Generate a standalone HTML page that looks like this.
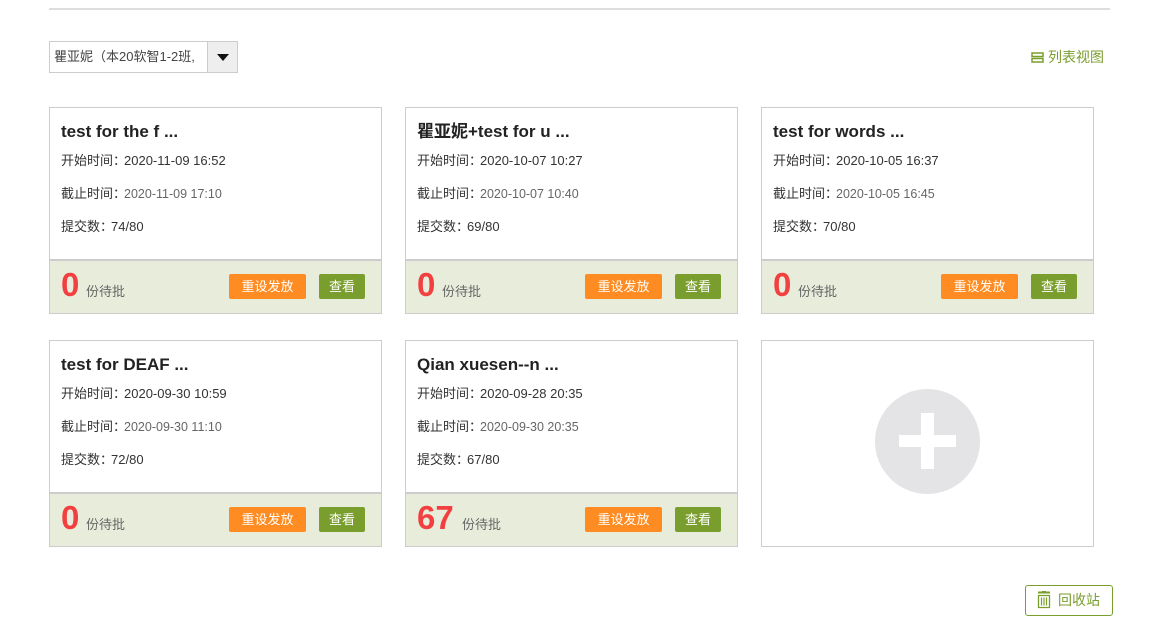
<!DOCTYPE html>
<html><head><meta charset="utf-8"><style>
*{margin:0;padding:0;box-sizing:border-box}
body{width:1164px;height:631px;background:#fff;position:relative;overflow:hidden;font-family:"Liberation Sans","Noto Sans CJK SC",sans-serif;color:#333}
.line{position:absolute;left:49px;top:8px;width:1061px;height:2px;background:#ddd}
.sel{position:absolute;left:49px;top:41px;width:189px;height:32px;border:1px solid #ccc;font-size:13px;line-height:30px;padding-left:4px;color:#444}
.sel .ar{position:absolute;right:0;top:0;width:30px;height:30px;background:#eee;border-left:1px solid #ccc}
.sel .ar:after{content:"";position:absolute;left:9px;top:12px;border-left:6px solid transparent;border-right:6px solid transparent;border-top:7px solid #111}
.lv{position:absolute;left:1031px;top:47px;font-size:14px;color:#7a9e2e;line-height:20px}
.card{position:absolute;width:333px;height:207px;border:1px solid #ccc;background:#fff}
.t{position:absolute;left:11px;top:13px;font-size:17px;font-weight:bold;color:#222;line-height:22px;height:22px;white-space:nowrap}
.r{position:absolute;left:11px;font-size:13px;color:#333;line-height:18px;white-space:nowrap}
.r span{margin-left:-2px}
.r.g span{color:#666;font-size:12.5px}
.ft{position:absolute;left:0;bottom:0;width:331px;height:54px;background:#e8eddb;border-top:2px solid #ccc}
.n{position:absolute;left:11px;top:5px;font-size:33px;font-weight:bold;color:#f24040;line-height:38px}
.w{position:absolute;top:22px;font-size:13px;color:#666;line-height:18px}
.b1{position:absolute;left:179px;top:13px;width:77px;height:25px;background:#ff8c22;color:#fff;font-size:13px;text-align:center;line-height:25px;border-radius:2px}
.b2{position:absolute;left:269px;top:13px;width:46px;height:25px;background:#7a9e2e;color:#fff;font-size:13px;text-align:center;line-height:25px;border-radius:2px}
.rb{position:absolute;left:1025px;top:585px;width:88px;height:31px;border:1px solid #7a9e2e;border-radius:3px;font-size:14px;color:#7a9e2e;line-height:29px;padding-left:32px}
</style></head><body>
<div class="line"></div>
<div class="sel">瞿亚妮（本20软智1-2班,<div class="ar"></div></div>
<div class="lv"><svg width="13" height="11" style="vertical-align:-1px;margin-right:4px"><rect x="1" y="1" width="11" height="3.5" fill="none" stroke="#7a9e2e" stroke-width="1.5"/><rect x="1" y="6.5" width="11" height="3.5" fill="none" stroke="#7a9e2e" stroke-width="1.5"/></svg>列表视图</div>

<div class="card" style="left:49px;top:107px"><div class="t">test for the f ...</div>
<div class="r" style="top:44px">开始时间：<span>2020-11-09 16:52</span></div>
<div class="r g" style="top:77px">截止时间：<span>2020-11-09 17:10</span></div>
<div class="r" style="top:110px">提交数：<span>74/80</span></div>
<div class="ft"><div class="n">0</div><div class="w" style="left:36px">份待批</div><div class="b1">重设发放</div><div class="b2">查看</div></div></div>

<div class="card" style="left:405px;top:107px"><div class="t">瞿亚妮+test for u ...</div>
<div class="r" style="top:44px">开始时间：<span>2020-10-07 10:27</span></div>
<div class="r g" style="top:77px">截止时间：<span>2020-10-07 10:40</span></div>
<div class="r" style="top:110px">提交数：<span>69/80</span></div>
<div class="ft"><div class="n">0</div><div class="w" style="left:36px">份待批</div><div class="b1">重设发放</div><div class="b2">查看</div></div></div>

<div class="card" style="left:761px;top:107px"><div class="t">test for words ...</div>
<div class="r" style="top:44px">开始时间：<span>2020-10-05 16:37</span></div>
<div class="r g" style="top:77px">截止时间：<span>2020-10-05 16:45</span></div>
<div class="r" style="top:110px">提交数：<span>70/80</span></div>
<div class="ft"><div class="n">0</div><div class="w" style="left:36px">份待批</div><div class="b1">重设发放</div><div class="b2">查看</div></div></div>

<div class="card" style="left:49px;top:340px"><div class="t">test for DEAF ...</div>
<div class="r" style="top:44px">开始时间：<span>2020-09-30 10:59</span></div>
<div class="r g" style="top:77px">截止时间：<span>2020-09-30 11:10</span></div>
<div class="r" style="top:110px">提交数：<span>72/80</span></div>
<div class="ft"><div class="n">0</div><div class="w" style="left:36px">份待批</div><div class="b1">重设发放</div><div class="b2">查看</div></div></div>

<div class="card" style="left:405px;top:340px"><div class="t">Qian xuesen--n ...</div>
<div class="r" style="top:44px">开始时间：<span>2020-09-28 20:35</span></div>
<div class="r g" style="top:77px">截止时间：<span>2020-09-30 20:35</span></div>
<div class="r" style="top:110px">提交数：<span>67/80</span></div>
<div class="ft"><div class="n">67</div><div class="w" style="left:56px">份待批</div><div class="b1">重设发放</div><div class="b2">查看</div></div></div>

<div class="card" style="left:761px;top:340px">
<div style="position:absolute;left:113px;top:48px;width:105px;height:105px;border-radius:50%;background:#e4e4e6"></div>
<div style="position:absolute;left:159px;top:72px;width:13px;height:56px;background:#fff"></div>
<div style="position:absolute;left:137px;top:94px;width:57px;height:12px;background:#fff"></div>
</div>

<div class="rb"><svg width="16" height="18" style="position:absolute;left:10px;top:5px"><rect x="2" y="0.5" width="12" height="2" fill="#7a9e2e"/><rect x="6" y="0" width="4" height="2" fill="#7a9e2e"/><path d="M2.5 4.5h11v12h-11z" fill="none" stroke="#7a9e2e" stroke-width="1.3"/><path d="M5.5 6.5v8M8 6.5v8M10.5 6.5v8" stroke="#7a9e2e" stroke-width="1.2"/></svg>回收站</div>
</body></html>
